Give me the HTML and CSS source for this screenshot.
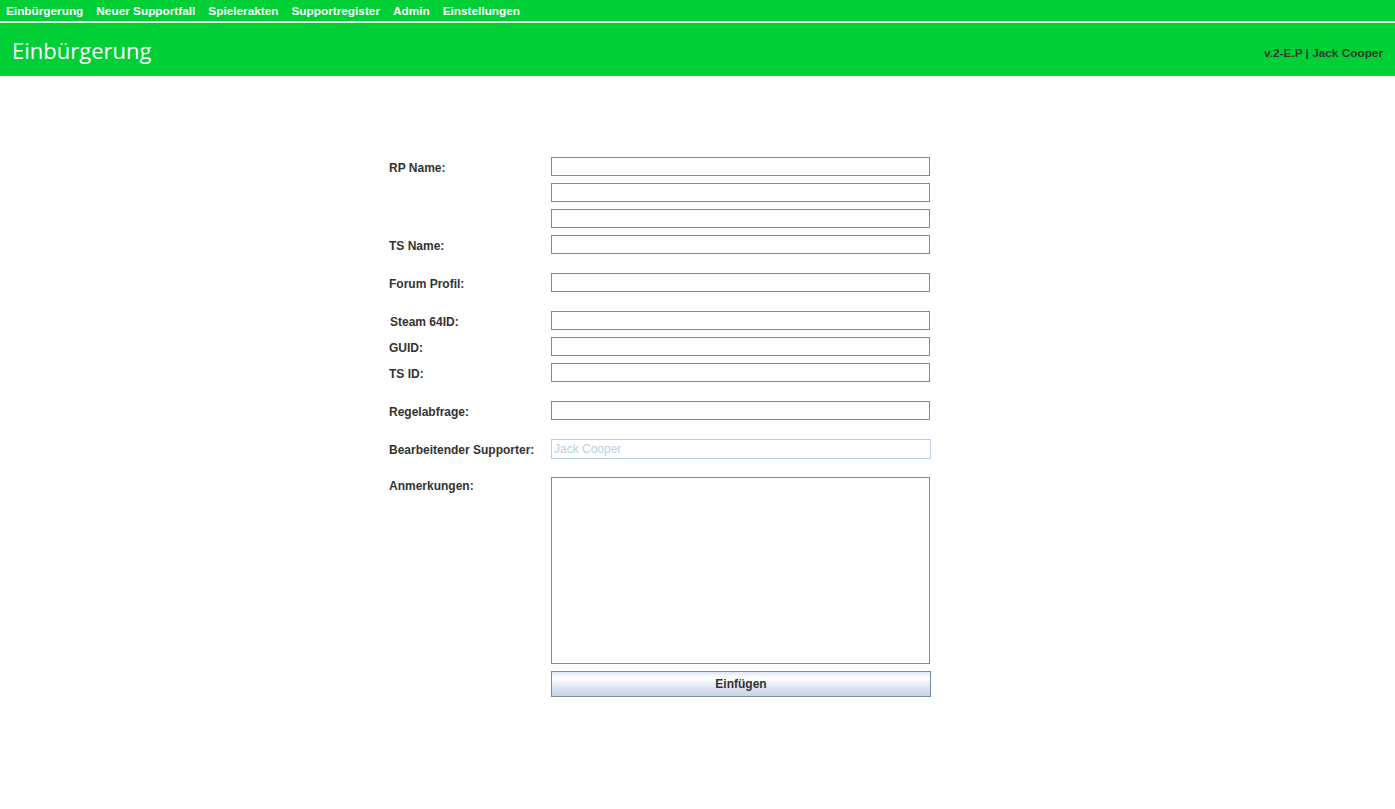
FILE: index.html
```html
<!DOCTYPE html>
<html lang="de">
<head>
    <meta charset="UTF-8">
    <title>Einbürgerung</title>
    <link rel="stylesheet" href="styles.css">
</head>
<body>
    <div class="menubar">
        <span class="menu-item">Einbürgerung</span>
        <span class="menu-item">Neuer Supportfall</span>
        <span class="menu-item">Spielerakten</span>
        <span class="menu-item">Supportregister</span>
        <span class="menu-item">Admin</span>
        <span class="menu-item">Einstellungen</span>
    </div>

    <div class="header">
        <div class="title">Einbürgerung</div>
        <div class="version">v.2-E.P | Jack Cooper</div>
    </div>

    <div class="form">
        <div class="group">
            <div class="row">
                <label>RP Name:</label>
                <input type="text">
            </div>
            <div class="row">
                <label></label>
                <input type="text">
            </div>
            <div class="row">
                <label></label>
                <input type="text">
            </div>
            <div class="row">
                <label>TS Name:</label>
                <input type="text">
            </div>
        </div>

        <div class="group">
            <div class="row">
                <label>Forum Profil:</label>
                <input type="text">
            </div>
        </div>

        <div class="group">
            <div class="row">
                <label class="indent">Steam 64ID:</label>
                <input type="text">
            </div>
            <div class="row">
                <label>GUID:</label>
                <input type="text">
            </div>
            <div class="row">
                <label>TS ID:</label>
                <input type="text">
            </div>
        </div>

        <div class="group">
            <div class="row">
                <label>Regelabfrage:</label>
                <input type="text">
            </div>
        </div>

        <div class="group">
            <div class="row">
                <label>Bearbeitender Supporter:</label>
                <input type="text" class="disabled" value="Jack Cooper" disabled>
            </div>
        </div>

        <div class="group">
            <div class="row">
                <label class="top">Anmerkungen:</label>
                <textarea></textarea>
            </div>
            <div class="row">
                <label></label>
                <button>Einfügen</button>
            </div>
        </div>
    </div>
</body>
</html>
```

FILE: styles.css
```css
body {
    margin: 0;
    background-color: #fff;
    font-family: "Liberation Sans", Arial, sans-serif;
    font-size: 12px;
    color: #333;
}
.menubar {
    display: flex;
    height: 21px;
    align-items: center;
    padding-left: 6px;
    background-color: #00cf36;
    border-bottom: 2px solid #e8f0ea;
}
.menu-item {
    color: #fff;
    font-weight: bold;
    font-size: 11.8px;
    margin-right: 13px;
}
.header {
    display: flex;
    justify-content: space-between;
    align-items: center;
    height: 53px;
    padding: 0 12px;
    background-color: #00cf36;
}
.title {
    color: #fff;
    font-family: "Open Sans", sans-serif;
    font-size: 22px;
}
.version {
    color: #2d3b30;
    font-weight: bold;
    font-size: 11.8px;
    margin-top: 6px;
}
.form {
    padding: 81px 0 0 389px;
}
.group {
    margin-bottom: 19px;
}
.row {
    display: flex;
    margin-bottom: 7px;
}
.row label {
    width: 162px;
    height: 19px;
    flex: none;
    font-weight: bold;
    line-height: 23px;
}
.row label.indent {
    padding-left: 1px;
    width: 161px;
}
.row label.top {
    line-height: 19px;
}
input[type="text"] {
    box-sizing: border-box;
    width: 379px;
    height: 19px;
    margin: 0;
    padding: 0 2px;
    border: 1px solid #7a8a99;
    border-radius: 0;
    font-family: "Liberation Sans", Arial, sans-serif;
    font-size: 12px;
    background: #fff;
}
input.disabled {
    height: 20px;
    width: 380px;
    margin-bottom: -1px;
    border-color: #b8cfe5;
    color: #b8cfe5;
}
textarea {
    box-sizing: border-box;
    width: 379px;
    height: 187px;
    margin: 0;
    border: 1px solid #7a8a99;
    resize: none;
}
button {
    box-sizing: border-box;
    width: 380px;
    height: 26px;
    border: 1px solid #7a8a99;
    background: linear-gradient(#e0e8f2, #ffffff 25%, #d8e2ee 70%, #c4d4e6);
    font-family: "Liberation Sans", Arial, sans-serif;
    font-size: 12px;
    font-weight: bold;
    color: #333;
}
```
